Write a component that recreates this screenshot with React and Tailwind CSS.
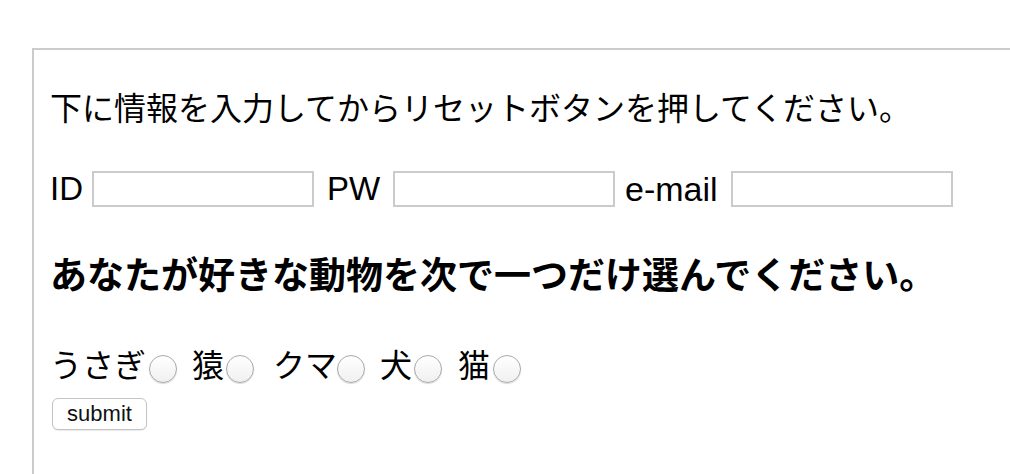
import { useState } from "react";

const animals = [
  { name: "うさぎ", label: "w-[99px]", gap: "mr-[15px]" },
  { name: "猿", label: "w-[34px]", gap: "mr-[19px]" },
  { name: "クマ", label: "w-[64px]", gap: "mr-[15px]" },
  { name: "犬", label: "w-[34px]", gap: "mr-[16px]" },
  { name: "猫", label: "w-[35px]", gap: "" },
];

export default function App() {
  const [form, setForm] = useState({ id: "", pw: "", email: "" });
  const [animal, setAnimal] = useState("");

  const update = (key) => (e) => setForm({ ...form, [key]: e.target.value });

  return (
    <div className="h-screen flex flex-col bg-white text-black font-['Liberation_Sans','Noto_Sans_CJK_JP',sans-serif] pt-[48px] pl-[32px] overflow-hidden">
      <form
        className="flex-1 border-t-2 border-l-2 border-[#cccccc] pl-[16px] pt-[39px]"
        onSubmit={(e) => e.preventDefault()}
      >
        <p className="text-[32px] leading-[40px] h-[40px] whitespace-nowrap">
          下に情報を入力してからリセットボタンを押してください。
        </p>

        {/* ID / PW / e-mail */}
        <div className="mt-[40px] h-[40px] flex items-center text-[32px] whitespace-nowrap">
          <span className="w-[42px] shrink-0 text-[33px]">ID</span>
          <input
            type="text"
            value={form.id}
            onChange={update("id")}
            className="w-[222px] h-[36px] shrink-0 border-2 border-[#cbcbcb] bg-white outline-none px-1 text-[20px]"
          />
          <span className="ml-[13px] w-[66px] shrink-0 text-[33px]">PW</span>
          <input
            type="password"
            value={form.pw}
            onChange={update("pw")}
            className="w-[222px] h-[36px] shrink-0 border-2 border-[#cbcbcb] bg-white outline-none px-1 text-[20px]"
          />
          <span className="ml-[10px] w-[106px] shrink-0 text-[34px]">e-mail</span>
          <input
            type="email"
            value={form.email}
            onChange={update("email")}
            className="w-[222px] h-[36px] shrink-0 border-2 border-[#cbcbcb] bg-white outline-none px-1 text-[20px]"
          />
        </div>

        <h3 className="mt-[46px] h-[44px] leading-[44px] text-[37px] font-bold whitespace-nowrap">
          あなたが好きな動物を次で一つだけ選んでください。
        </h3>

        {/* radio buttons */}
        <div className="mt-[47px] h-[40px] flex items-center text-[32px] whitespace-nowrap">
          {animals.map((a) => (
            <label key={a.name} className="flex items-center shrink-0">
              <span className={`${a.label} shrink-0`}>{a.name}</span>
              <input
                type="radio"
                name="animal"
                checked={animal === a.name}
                onChange={() => setAnimal(a.name)}
                className={`appearance-none shrink-0 w-[28px] h-[28px] mt-[5px] rounded-full border-[1.5px] border-[#a9a9a9] bg-gradient-to-b from-white to-[#f0f0f0] shadow-[0_1px_1px_rgba(0,0,0,0.15)] checked:border-[8px] checked:border-[#3b82f6] ${a.gap}`}
              />
            </label>
          ))}
        </div>

        <button
          type="submit"
          className="mt-[12px] ml-[2px] w-[95px] h-[32px] rounded-[6px] border border-[#c4c4c4] bg-white shadow-[0_1px_1px_rgba(0,0,0,0.08)] text-[22px] leading-none text-[#111]"
        >
          submit
        </button>
      </form>
    </div>
  );
}
